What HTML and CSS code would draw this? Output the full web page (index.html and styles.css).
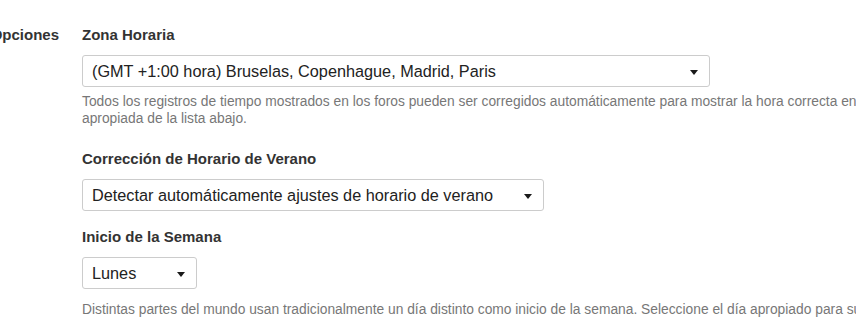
FILE: index.html
```html
<!DOCTYPE html>
<html lang="es">
<head>
<meta charset="utf-8">
<title>Opciones</title>
<link rel="stylesheet" href="styles.css">
</head>
<body>
<div class="page">
  <div class="section-title">Opciones</div>
  <div class="fields">
    <div class="field">
      <div class="field-label">Zona Horaria</div>
      <div class="select select-wide">
        <span class="select-text">(GMT +1:00 hora) Bruselas, Copenhague, Madrid, Paris</span>
        <svg class="arrow" width="8" height="5" viewBox="0 0 8 5"><path d="M0 0H8L4 5Z"/></svg>
      </div>
      <p class="help">Todos los registros de tiempo mostrados en los foros pueden ser corregidos automáticamente para mostrar la hora correcta en<br>apropiada de la lista abajo.</p>
    </div>
    <div class="field field-compact">
      <div class="field-label">Corrección de Horario de Verano</div>
      <div class="select select-medium">
        <span class="select-text">Detectar automáticamente ajustes de horario de verano</span>
        <svg class="arrow" width="8" height="5" viewBox="0 0 8 5"><path d="M0 0H8L4 5Z"/></svg>
      </div>
    </div>
    <div class="field">
      <div class="field-label">Inicio de la Semana</div>
      <div class="select select-small">
        <span class="select-text">Lunes</span>
        <svg class="arrow" width="8" height="5" viewBox="0 0 8 5"><path d="M0 0H8L4 5Z"/></svg>
      </div>
      <p class="help help-spaced">Distintas partes del mundo usan tradicionalmente un día distinto como inicio de la semana. Seleccione el día apropiado para su</p>
    </div>
  </div>
</div>
</body>
</html>
```

FILE: styles.css
```css
html, body {
  margin: 0;
  padding: 0;
  overflow: hidden;
  background: #ffffff;
}

body {
  font-family: "Liberation Sans", Arial, sans-serif;
  color: #333333;
}

.page {
  display: grid;
  grid-template-columns: 59px 1fr;
  column-gap: 23px;
  padding-top: 26px;
}

.section-title {
  display: flex;
  justify-content: flex-end;
  white-space: nowrap;
  font-size: 15px;
  font-weight: bold;
  line-height: 18px;
  color: #333333;
}

.fields {
  display: flex;
  flex-direction: column;
  min-width: 0;
}

.field {
  margin-bottom: 23px;
}

.field-compact {
  margin-bottom: 17px;
}

.field-label {
  font-size: 15px;
  font-weight: bold;
  line-height: 18px;
  color: #333333;
  margin-bottom: 11px;
  white-space: nowrap;
}

.select {
  box-sizing: border-box;
  height: 32px;
  display: flex;
  align-items: center;
  justify-content: space-between;
  padding: 0 11px 0 9px;
  border: 1px solid #cccccc;
  border-radius: 3px;
  background: #ffffff;
}

.select-wide { width: 628px; }
.select-medium { width: 462px; }
.select-small { width: 115px; }

.select-text {
  font-size: 16.25px;
  line-height: 20px;
  color: #222222;
  white-space: nowrap;
}

.arrow {
  flex: none;
  fill: #1a1a1a;
  margin-top: 2px;
}

.help {
  margin: 6px 0 0 0;
  font-size: 13.8px;
  line-height: 17px;
  color: #777777;
  white-space: nowrap;
}

.help-spaced {
  margin-top: 12px;
}
```
